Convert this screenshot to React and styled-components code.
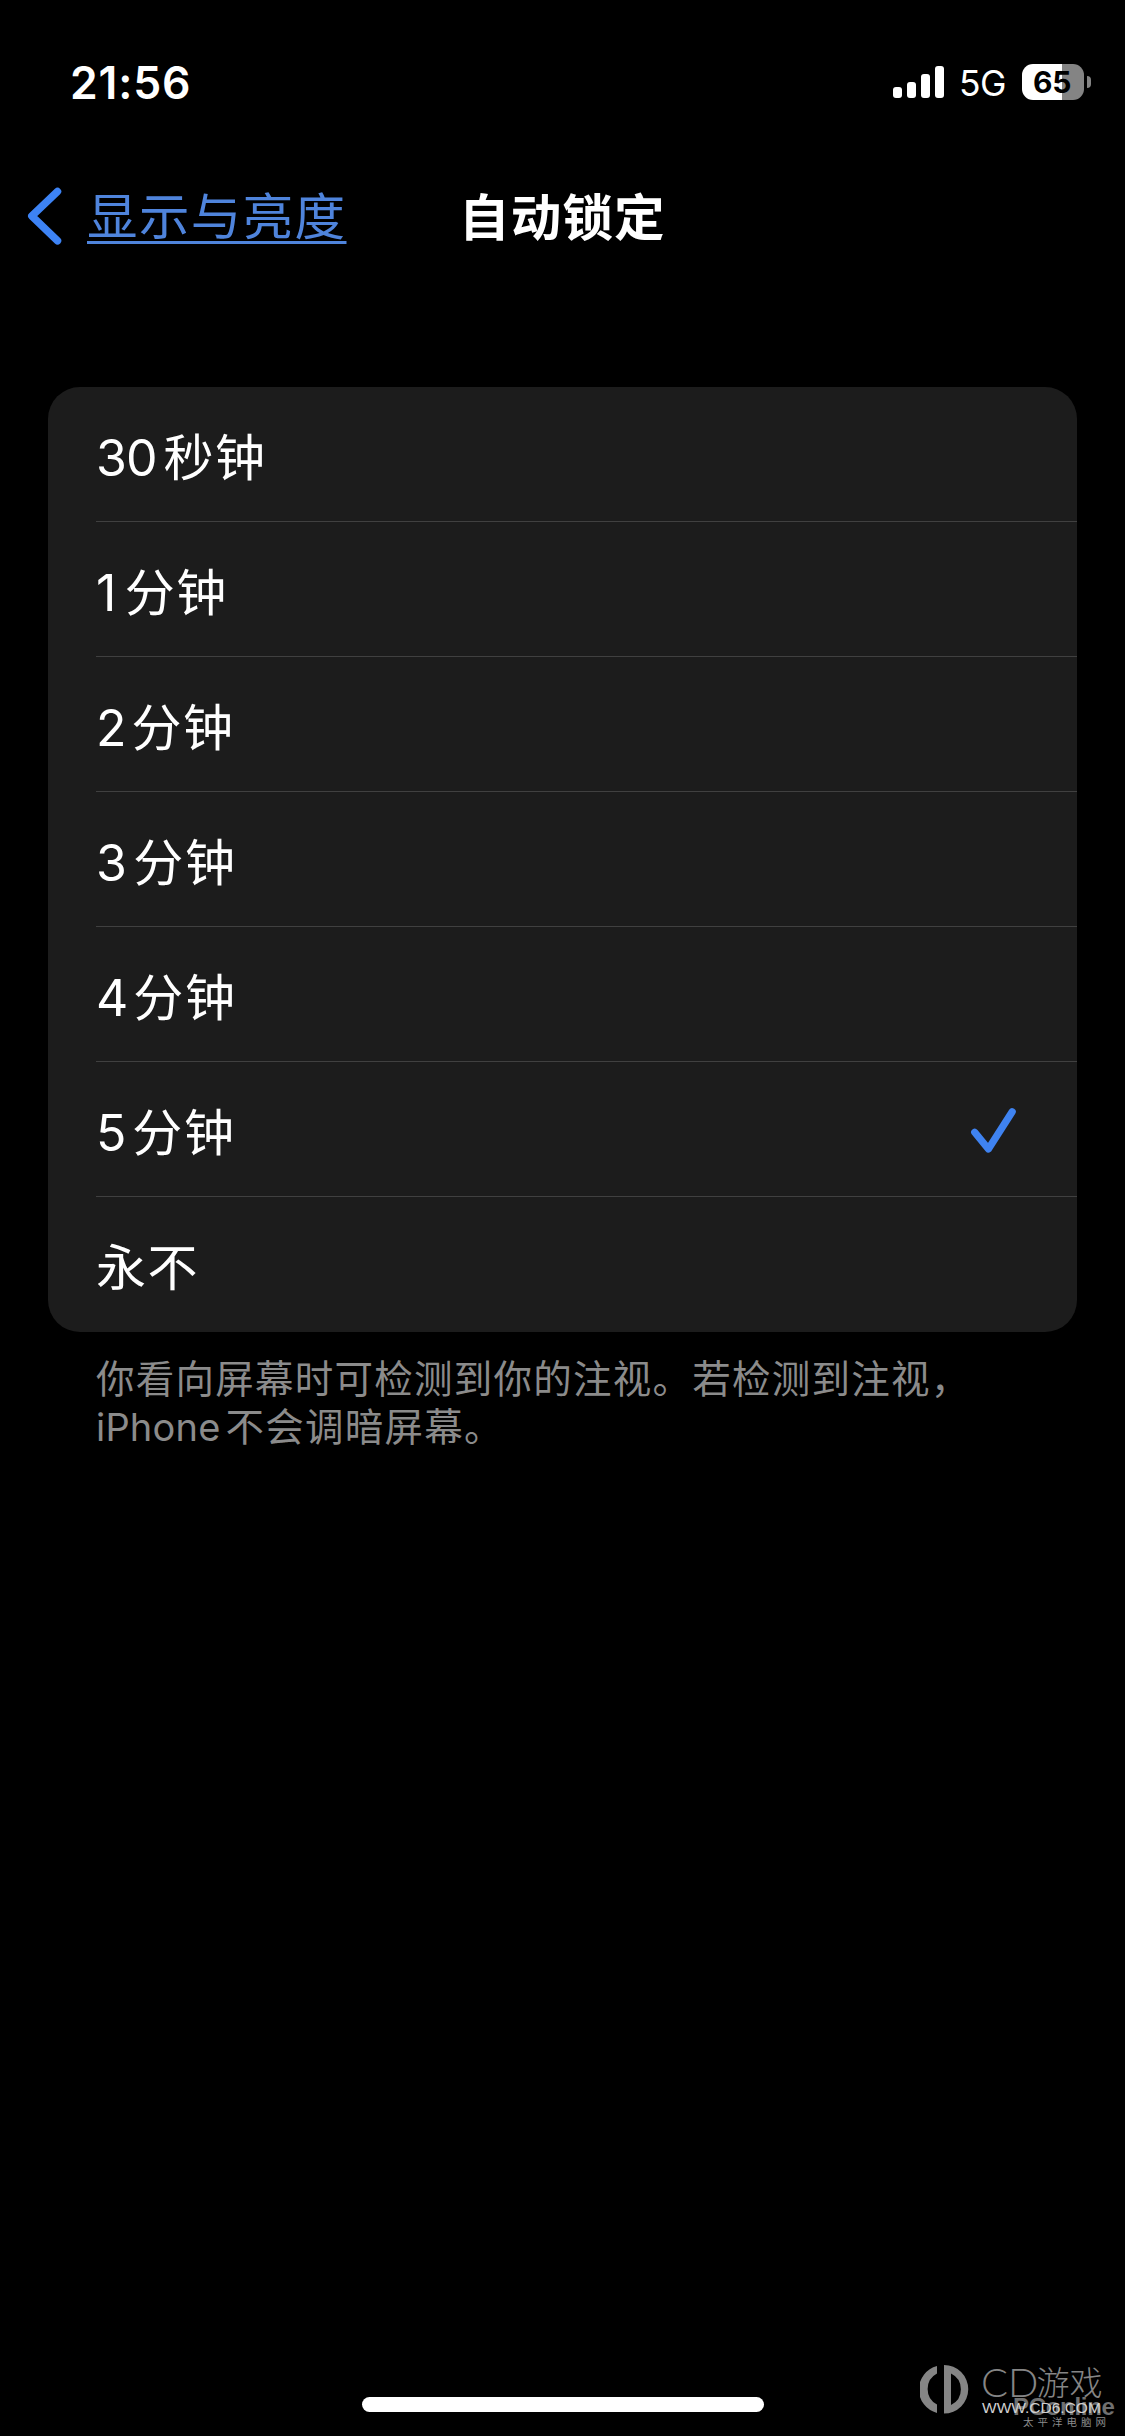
import React from "react";
import styled, { createGlobalStyle } from "styled-components";

const Global = createGlobalStyle`
  html, body { margin: 0; background: #000; }
  * { box-sizing: border-box; }
`;

const Screen = styled.main`
  position: relative;
  display: flex;
  flex-direction: column;
  width: 1125px;
  height: 2436px;
  overflow: hidden;
  background: #000;
  color: #fff;
  font-family: "Inter", "Noto Sans CJK SC", sans-serif;
`;

const StatusBar = styled.header`
  display: flex;
  align-items: center;
  justify-content: space-between;
  height: 164px;
  padding: 0 34px 0 70px;
`;

const Clock = styled.time`
  padding-top: 1px;
  font-size: 44.5px;
  font-weight: 600;
  line-height: 52px;
  letter-spacing: 0.8px;
`;

const StatusIcons = styled.div`
  display: flex;
  align-items: center;
`;

const SignalBars = styled.div`
  display: flex;
  align-items: flex-end;
  gap: 5px;
  height: 32px;
`;

const SignalBar = styled.span`
  width: 9px;
  height: ${(p) => p.$height}px;
  border-radius: 3px;
  background: #fff;
`;

const Network = styled.span`
  width: 78px;
  padding: 3px 0 0 15px;
  font-size: 35.5px;
  line-height: 40px;
  letter-spacing: -0.7px;
`;

const Battery = styled.div`
  display: flex;
  align-items: center;
  gap: 3px;
`;

const BatteryBody = styled.div`
  width: 62px;
  height: 36px;
  padding-right: 2px;
  border-radius: 11px;
  background: linear-gradient(to right, #fff 0 40px, #848484 40px);
  color: #000;
  font-size: 30px;
  font-weight: 700;
  line-height: 37px;
  letter-spacing: -0.3px;
  text-align: center;
`;

const BatteryTip = styled.span`
  width: 4px;
  height: 12px;
  border-radius: 0 6px 6px 0;
  background: #848484;
`;

const NavBar = styled.nav`
  display: grid;
  grid-template-columns: 459px auto 1fr;
  align-items: center;
  height: 104px;
`;

const Back = styled.a`
  display: flex;
  align-items: center;
  padding-left: 27px;
  color: #4f84dc;
`;

const BackText = styled.span`
  height: 60px;
  margin-left: 25px;
  padding-top: 4px;
  font-size: 50.5px;
  line-height: 54px;
  letter-spacing: 1.4px;
  text-decoration: underline;
  text-decoration-thickness: 3px;
  text-underline-offset: 6px;
  text-decoration-skip-ink: none;
`;

const Title = styled.h1`
  margin: 0;
  padding-top: 4px;
  font-size: 50.5px;
  font-weight: 600;
  line-height: 60px;
  letter-spacing: 1.2px;
`;

const Card = styled.ul`
  margin: 119px 48px 0;
  padding: 0;
  border-radius: 32px;
  background: #1c1c1c;
  list-style: none;
`;

const Row = styled.li`
  display: flex;
  align-items: center;
  justify-content: space-between;
  height: 135px;
  margin-left: 48px;
  padding: 0 61px 0 0;
  border-bottom: ${(p) => (p.$last ? "0" : "1px solid #404040")};
`;

const Label = styled.span`
  display: flex;
  align-items: baseline;
  padding-top: 7px;
  font-size: 50px;
  line-height: 60px;
  letter-spacing: 1.6px;
`;

const Digits = styled.span`
  width: ${(p) => p.$width}px;
  font-size: 50px;
  letter-spacing: -0.8px;
`;

const Note = styled.p`
  margin: 23px 96px 0;
  color: #8b8b8b;
  font-size: 38.5px;
  line-height: 48px;
  letter-spacing: 1.25px;
  white-space: nowrap;
`;

const NoteLatin = styled.span`
  margin-right: 5px;
  font-size: 38px;
  letter-spacing: 0.2px;
`;

const HomeIndicator = styled.div`
  width: 402px;
  height: 15px;
  margin: auto 361px 24px 362px;
  border-radius: 8px;
  background: #fff;
`;

const Watermark = styled.div`
  position: absolute;
  left: 920px;
  top: 2365px;
  display: flex;
  gap: 12px;
  color: #858585;
`;

const Brand = styled.div`
  display: flex;
  flex-direction: column;
`;

const BrandName = styled.span`
  display: flex;
  align-items: center;
  height: 34px;
  font-family: "Lato", "Noto Sans CJK SC", sans-serif;
  font-size: 40px;
  font-weight: 300;
  line-height: 34px;
`;

const BrandChinese = styled.span`
  margin-left: -2px;
  font-size: 33px;
`;

const BrandUrl = styled.span`
  padding-left: 1px;
  color: #d0d0d0;
  font-family: "Liberation Sans", Arial, sans-serif;
  font-size: 15.5px;
  line-height: 18px;
`;

const SourceMark = styled.div`
  position: absolute;
  left: 1013px;
  top: 2396px;
  display: flex;
  flex-direction: column;
  color: #707070;
  font-family: "Liberation Sans", "Noto Sans CJK SC", sans-serif;
`;

const SourceName = styled.span`
  font-size: 24px;
  font-weight: 700;
  line-height: 21px;
  letter-spacing: -0.3px;
`;

const SourceChinese = styled.span`
  padding-left: 10px;
  color: #8c8c8c;
  font-size: 10.5px;
  line-height: 11px;
  letter-spacing: 4px;
`;

const options = [
  { digits: "30", text: "秒钟", width: 67.5 },
  { digits: "1", text: "分钟", width: 28.7 },
  { digits: "2", text: "分钟", width: 35.5 },
  { digits: "3", text: "分钟", width: 37.3 },
  { digits: "4", text: "分钟", width: 37.3 },
  { digits: "5", text: "分钟", width: 36.3, selected: true },
  { text: "永不" },
];

const Chevron = () => (
  <svg width="35" height="58" viewBox="0 0 35 58" fill="none">
    <path d="M30.5 4.5 4.8 29l25.7 24.8" stroke="#3d83f5" strokeWidth="7.5" strokeLinecap="round" strokeLinejoin="round" />
  </svg>
);

const Check = () => (
  <svg width="46" height="48" viewBox="0 0 46 48" fill="none">
    <path d="m4.700 27.200 13.700 16.800L42.200 6.800" stroke="#3f83f1" strokeWidth="7.200" strokeLinecap="round" strokeLinejoin="round" />
  </svg>
);

const BrandLogo = () => (
  <svg width="49" height="49" viewBox="0 0 49 49" fill="#858585">
    <path d="M17 1v7.500a17.500 17.500 0 0 0 0 31V48a24.300 24.300 0 0 1 0-47Z" />
    <path fillRule="evenodd" d="M24 0a24.200 24.200 0 0 1 0 48.500ZM31 8.500v31.500a17.500 17.500 0 0 0 0-31.500Z" />
  </svg>
);

export default function App() {
  return (
    <Screen>
      <Global />
      <StatusBar>
        <Clock>21:56</Clock>
        <StatusIcons>
          <SignalBars>
            {[11, 16, 24, 32].map((h) => (
              <SignalBar key={h} $height={h} />
            ))}
          </SignalBars>
          <Network>5G</Network>
          <Battery>
            <BatteryBody>65</BatteryBody>
            <BatteryTip />
          </Battery>
        </StatusIcons>
      </StatusBar>
      <NavBar>
        <Back>
          <Chevron />
          <BackText>显示与亮度</BackText>
        </Back>
        <Title>自动锁定</Title>
      </NavBar>
      <Card>
        {options.map((o, i) => (
          <Row key={i} $last={i === options.length - 1}>
            <Label>
              {o.digits && <Digits $width={o.width}>{o.digits}</Digits>}
              {o.text}
            </Label>
            {o.selected && <Check />}
          </Row>
        ))}
      </Card>
      <Note>
        你看向屏幕时可检测到你的注视。若检测到注视，
        <br />
        <NoteLatin>iPhone</NoteLatin>不会调暗屏幕。
      </Note>
      <HomeIndicator />
      <SourceMark>
        <SourceName>PConline</SourceName>
        <SourceChinese>太平洋电脑网</SourceChinese>
      </SourceMark>
      <Watermark>
        <BrandLogo />
        <Brand>
          <BrandName>
            CD<BrandChinese>游戏</BrandChinese>
          </BrandName>
          <BrandUrl>WWW.CD6.COM</BrandUrl>
        </Brand>
      </Watermark>
    </Screen>
  );
}
